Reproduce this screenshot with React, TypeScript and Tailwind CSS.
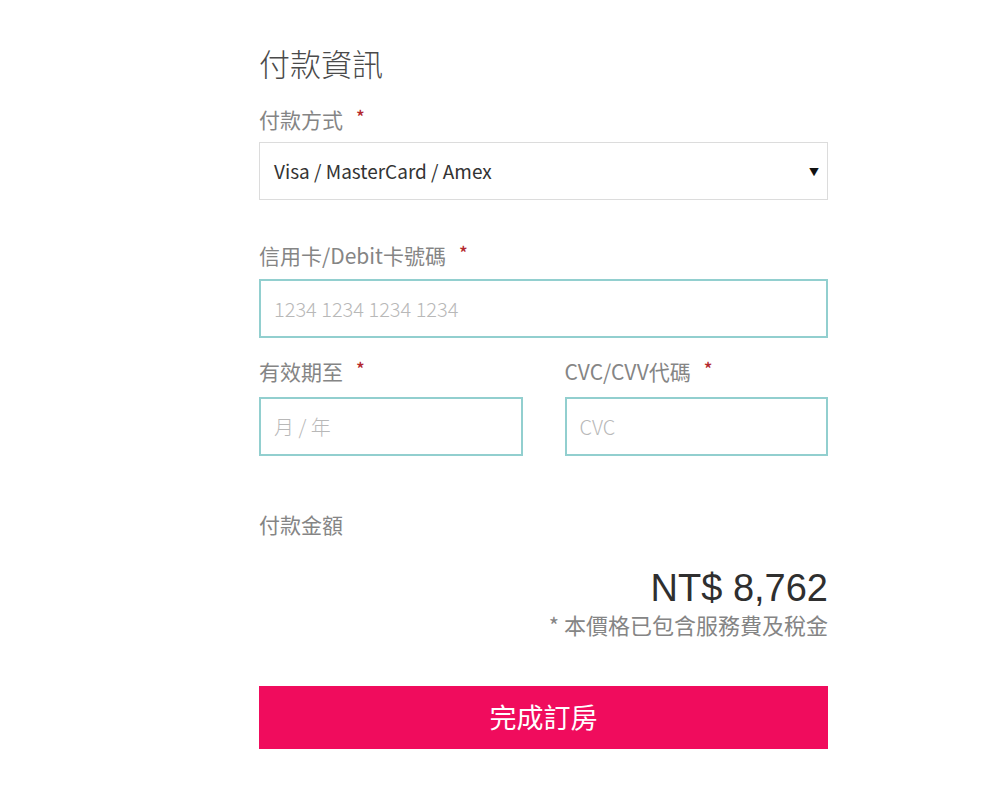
import React from "react";

const cjk = { fontFamily: '"Noto Sans CJK TC", "Noto Sans", sans-serif' };

function Label({ text }: { text: string }) {
  return (
    <div className="flex items-center h-[24px] text-[21px] font-normal text-[#858585] leading-none">
      <span>{text}</span>
      <span className="ml-[13px] text-[#b3282d] text-[18px] font-medium relative top-[-3px]">*</span>
    </div>
  );
}

export default function App() {
  return (
    <div className="w-[1000px] h-[798px] bg-white" style={cjk}>
      <div className="ml-[259px] w-[569px] pt-[43px]">
        <h1 className="text-[31px] font-light text-[#4a4a4a] leading-[40px]">付款資訊</h1>

        <div className="mt-[24px]">
          <Label text="付款方式" />
        </div>
        <div className="mt-[11px] h-[58px] border border-[#dcdcdc] flex items-center justify-between pl-[14px] pr-[8px]">
          <span className="text-[19px] text-[#333]">Visa / MasterCard / Amex</span>
          <span className="text-[10px] text-[#111]">▼</span>
        </div>

        <div className="mt-[43px]">
          <Label text="信用卡/Debit卡號碼" />
        </div>
        <div className="mt-[12px] h-[59px] border-2 border-[#92cfcf] flex items-center pl-[13px]">
          <span className="text-[20px] font-light text-[#b8b8b8]">1234 1234 1234 1234</span>
        </div>

        <div className="mt-[21px] grid grid-cols-2 gap-[42px]">
          <div>
            <Label text="有效期至" />
            <div className="mt-[14px] h-[59px] border-2 border-[#92cfcf] flex items-center pl-[13px]">
              <span className="text-[20px] font-light text-[#b8b8b8]">月 / 年</span>
            </div>
          </div>
          <div>
            <Label text="CVC/CVV代碼" />
            <div className="mt-[14px] h-[59px] border-2 border-[#92cfcf] flex items-center pl-[13px]">
              <span className="text-[20px] font-light text-[#b8b8b8]">CVC</span>
            </div>
          </div>
        </div>

        <div className="mt-[56px] text-[21px] font-normal text-[#858585] leading-[24px]">付款金額</div>

        <div className="mt-[31px] flex flex-col items-end">
          <div
            className="text-[38px] text-[#2f2f2f] leading-[42px]"
            style={{ fontFamily: '"Liberation Sans", Arial, sans-serif' }}
          >
            NT$ 8,762
          </div>
          <div className="mt-[2px] text-[22px] font-normal text-[#858585] leading-[26px]">* 本價格已包含服務費及稅金</div>
        </div>

        <button className="mt-[49px] w-full h-[63px] bg-[#f00c5d] text-white text-[27px] flex items-center justify-center">
          完成訂房
        </button>
      </div>
    </div>
  );
}
